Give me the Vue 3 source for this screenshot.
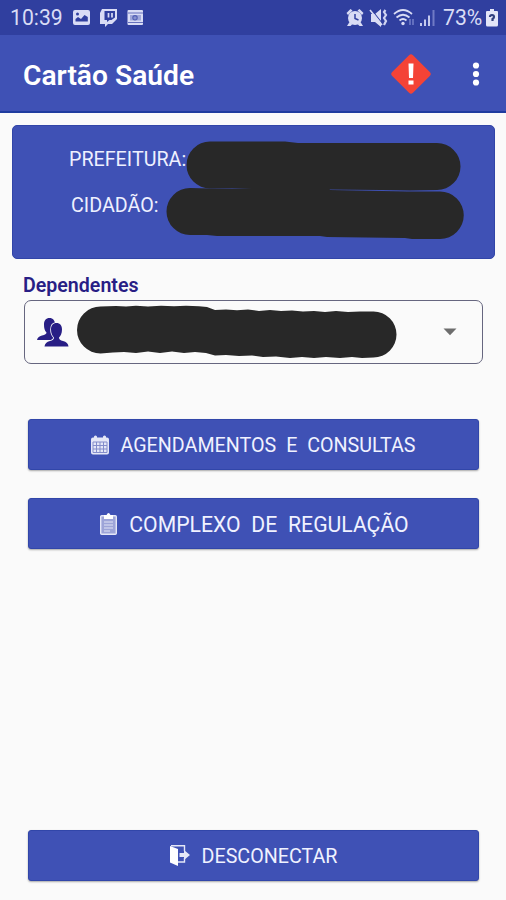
<script setup>
const actions = [
  { id: 'agenda', label: 'AGENDAMENTOS E CONSULTAS' },
  { id: 'regulacao', label: 'COMPLEXO DE REGULAÇÃO' },
]
</script>

<template>
  <div class="screen">
    <header class="status">
      <span class="clock">10:39</span>
      <svg class="status-left" width="74" height="20" viewBox="0 0 74 20">
        <path fill="#d9dcf5" fill-rule="evenodd" d="M3 2H16Q18 2 18 4V15Q18 17 16 17H3Q1 17 1 15V4Q1 2 3 2ZM3.500 13.500H15.800V9L12.500 7L9 11L6 9L3.500 11Z" />
        <circle cx="5.500" cy="6" r="1.500" fill="#303f9f" />
        <path fill="#d9dcf5" fill-rule="evenodd" d="M30 1H45V11L40 16H36L33 19V16H28V5ZM32.500 3V12H35V14L37.500 12H39.500L43 9.500V3Z" />
        <path d="M36.500 5V9.500M40 5V9.500" stroke="#d9dcf5" stroke-width="1.700" />
        <rect x="55.500" y="2" width="15.500" height="15" rx="1" fill="#d9dcf5" />
        <path d="M56 5H71M56 14.500H71" stroke="#6671bd" stroke-width="1" />
        <rect x="58" y="7" width="11" height="5.500" fill="#a0a7da" />
        <circle cx="63" cy="9.800" r="2.200" fill="#8790ce" stroke="#5360b5" stroke-width="1.100" />
      </svg>
      <span class="fill"></span>
      <svg class="status-right" width="94" height="22" viewBox="0 0 94 22">
        <g fill="#d9dcf5">
          <circle cx="13" cy="11" r="7" />
          <path d="M4.500 6L8.500 2L10.500 3.500L6 8ZM21.500 6L17.500 2L15.500 3.500L20 8ZM7.500 15L5 19H8.500L10.500 17ZM18.500 15L21 19H17.500L15.500 17Z" />
          <path d="M29 7H33L39 2V20L33 15H29Z" />
        </g>
        <path d="M13 7V11.500L16.500 13" stroke="#303f9f" stroke-width="1.500" fill="none" />
        <path d="M29 2L40 16" stroke="#303f9f" stroke-width="1.200" />
        <path d="M28 3L40 18" stroke="#d9dcf5" stroke-width="1.600" />
        <path d="M43.500 3L42 5L44 8L42 11L44 14L42 18" stroke="#d0d4f2" stroke-width="2.200" fill="none" />
        <g fill="none" stroke="#d9dcf5" stroke-width="1.700">
          <path d="M52 7Q61 -1 70 7" />
          <path d="M54.500 10.500Q61 5 67.500 10.500" />
          <path d="M57.500 13.500Q61 10.500 64.500 13.500" />
        </g>
        <circle cx="61" cy="16.500" r="1.700" fill="#d9dcf5" />
        <path d="M68 18V12M71 12V18" stroke="#6c78c5" stroke-width="1.700" />
        <path d="M79 19V16M83 19V12.500M87 19V8.500" stroke="#c5caed" stroke-width="2" />
        <path d="M91.500 19V3" stroke="#707bc5" stroke-width="2" />
      </svg>
      <span class="percent">73%</span>
      <svg class="battery" width="12" height="18" viewBox="0 0 12 18">
        <path d="M4 0H8V2H11Q12 2 12 3V16Q12 17.500 10.500 17.500H1.500Q0 17.500 0 16V3Q0 2 1 2H4Z" fill="#e3e5f8" />
        <path d="M4 8Q4 6 6 6Q8 6 8 8Q8 9 6.500 10V12" fill="none" stroke="#303f7f" stroke-width="2.200" />
      </svg>
    </header>

    <div class="appbar">
      <h1>Cartão Saúde</h1>
      <svg class="alert" width="42" height="42" viewBox="0 0 42 42">
        <rect x="6.300" y="6.300" width="29.400" height="29.400" rx="2.800" transform="rotate(45 21 21)" fill="#f44336" />
        <path d="M18.500 10.500H23.500L23 25H19ZM18.500 27.500H23.500V31.500H18.500Z" fill="#fff" />
      </svg>
      <svg class="more" width="8" height="26" viewBox="0 0 8 26">
        <circle cx="4" cy="4.500" r="3.100" fill="#fff" />
        <circle cx="4" cy="13" r="3.100" fill="#fff" />
        <circle cx="4" cy="21.500" r="3.100" fill="#fff" />
      </svg>
    </div>

    <main>
      <section class="card">
        <p class="city">PREFEITURA:</p>
        <p class="citizen">CIDADÃO:</p>
        <svg class="marks" width="483" height="134" viewBox="0 0 483 134">
          <path fill="#282828" d="M198 16.500H273L286 18H425A23.500 23.500 0 0 1 425 65L398 65.500L370 65L316 64.500L268 63.500L198 63.500A23.500 23.500 0 0 1 198 16.500Z" />
          <path fill="#282828" d="M178 63L220 64L240 63H317L318 65L395 66.500H428A23.700 23.700 0 0 1 428 114H400L393 113L315 112L308 111H205L195 110H178A23.500 23.500 0 0 1 178 63Z" />
        </svg>
      </section>

      <label class="field-label">Dependentes</label>
      <div class="select">
        <svg class="people" width="32" height="29" viewBox="0 0 32 29">
          <path fill="#281e85" d="M12.500 0C16 0 18 2.500 18 6.500C18 10 17 12.500 15.500 14.500Q15.500 17 19 17.500V22H0Q.500 18.500 5 17.500Q9.500 16.500 9.500 14.500C7.500 12.500 7 10 7 6.500C7 2.500 9 0 12.500 0Z" />
          <path fill="#281e85" stroke="#fafafa" stroke-width="1.600" paint-order="stroke" d="M19.500 5C23 5 25 7.500 25 11.500C25 15.500 23.500 18 22 19.500Q22 22 26 23Q31 24 31.500 28.500H7.500Q8 24 13 23Q17 22 17 19.500C15.500 18 14 15.500 14 11.500C14 7.500 16 5 19.500 5Z" />
        </svg>
        <svg class="redaction" width="322" height="54" viewBox="0 0 322 54">
          <path fill="#282828" d="M24.500 1.500L40 1L50 1.500L60 .800L72 1.500L85 .800L98 1.200L110 .700L123 1.200L131 2L139 5L150 4.500L161 5.300L172 4.500L183 6L194 5L205 6L216 5.500L227 6.500L238 6L249 7L260 6L272 7L284 6.500H297.500A23 23 0 0 1 297.500 52.500L286 53L276 52L264 53L250 52L238 53L226 52L214 53L200 51.500L187 52L176 50.500L163 51L150 50L139 50.500L130 48L119 47L108 48L96 46.500L84 48L72 46.500L60 48L48 47L37 47.500L24.500 48.500A23.500 23.500 0 0 1 24.500 1.500Z" />
        </svg>
        <span class="fill"></span>
        <svg class="caret" width="14" height="8" viewBox="0 0 14 8">
          <path d="M.500 .500H13.500L7 7.300Z" fill="#6d6d6d" />
        </svg>
      </div>

      <div class="actions">
        <button v-for="action in actions" :key="action.id" :class="['button', action.id]">
          <svg v-if="action.id === 'agenda'" width="18" height="20" viewBox="0 0 18 20">
            <path d="M2 2.500H3V1.500Q4.500 -.500 6 1.500V2.500H12V1.500Q13.500 -.500 15 1.500V2.500H16Q18 2.500 18 4.500V17.500Q18 19.500 16 19.500H2Q0 19.500 0 17.500V4.500Q0 2.500 2 2.500Z" fill="#e5e7f7" />
            <path d="M2 7H16V17.500H2ZM2 10.500H16M2 14H16M5.500 7V17.500M9 7V17.500M12.500 7V17.500" fill="none" stroke="#848dcb" stroke-width="1" />
          </svg>
          <svg v-else width="17" height="22" viewBox="0 0 17 22">
            <rect x=".700" y="2.700" width="15.600" height="18.600" rx="1" fill="#9da4d8" stroke="#e5e7f7" stroke-width="1.400" />
            <path d="M4 2H6.500Q8.500 -2 10.500 2H13V6H4Z" fill="#fff" />
            <path d="M4 9H13M4 12H13M4 15H13M4 18H10" stroke="#e1e3f5" stroke-width="1" />
          </svg>
          <span>{{ action.label }}</span>
        </button>
      </div>

      <button class="button logout">
        <svg width="20" height="21" viewBox="0 0 20 21">
          <path d="M1 .700H14.500V6M14.500 13V17H8" fill="none" stroke="#e5e7f7" stroke-width="1.400" />
          <path d="M0 1L8 4V21L0 17.500Z" fill="#fff" />
          <path d="M9.500 8H14V5L20 10L14 15V12H9.500Z" fill="#e5e7f7" />
        </svg>
        <span>DESCONECTAR</span>
      </button>
    </main>
  </div>
</template>

<style>
body { background: #fafafa; }
</style>

<style scoped>
* { box-sizing: border-box; }
.screen { display: flex; flex-direction: column; width: 506px; height: 900px; background: #fafafa; font-family: Roboto, sans-serif; overflow: hidden; }
.status { display: flex; align-items: center; height: 35px; padding: 0 8px 0 10px; background: #303f9f; color: #d9dcf5; font-size: 21.2px; }
.clock { width: 62px; line-height: 37px; white-space: nowrap; }
.fill { flex: 1; }
.percent { width: 41px; margin-left: 7px; margin-right: 2px; line-height: 37px; white-space: nowrap; }
.appbar { display: flex; align-items: center; height: 78px; padding: 0 26px 0 23px; background: #3f51b5; border-bottom: 2px solid #1f3c9f; color: #fff; }
h1 { flex: 1; margin: 6px 0 0; font-size: 28.2px; font-weight: 600; line-height: 34px; }
.alert, .more { margin-top: 1px; }
.more { margin-left: 40px; }
main { display: flex; flex-direction: column; flex: 1; padding: 12px 11px 19px 12px; }
.card { position: relative; flex: none; height: 134px; padding-top: 21px; background: #3f51b5; border: 1px solid #3145a8; border-radius: 5px; color: #eef0ff; font-size: 19.7px; }
.card p { margin: 0; line-height: 25px; }
.city { padding-left: 56px; }
.card .citizen { margin-top: 21px; padding-left: 58px; }
.marks { position: absolute; left: -1px; top: -1px; }
.field-label { margin: 14px 0 0 11px; height: 27px; line-height: 25px; font-size: 19.6px; font-weight: 600; color: #281e85; }
.select { display: flex; align-items: center; height: 64px; margin: 0 12px; padding: 0 25px 0 12px; border: 1.5px solid #66667f; border-radius: 7px; }
.people { margin-right: 7px; }
.actions { display: flex; flex-direction: column; gap: 28px; margin: 55px 16px 0; }
.button { display: flex; align-items: center; justify-content: center; height: 51px; padding: 3px 0 0; border: 1px solid #3146a9; border-radius: 3px; background: #3f51b5; color: #f0f2ff; font: 400 21.2px/26px Roboto, sans-serif; word-spacing: 5.5px; box-shadow: 0 1px 2px #0005; white-space: nowrap; }
.regulacao { padding-left: 2px; }
.agenda { font-size: 19.7px; word-spacing: 5px; }
.button svg { margin: 0 12px 3px 0; }
.agenda svg { margin-right: 11px; }
.logout { margin: auto 16px 0; font-size: 19.7px; }
</style>
